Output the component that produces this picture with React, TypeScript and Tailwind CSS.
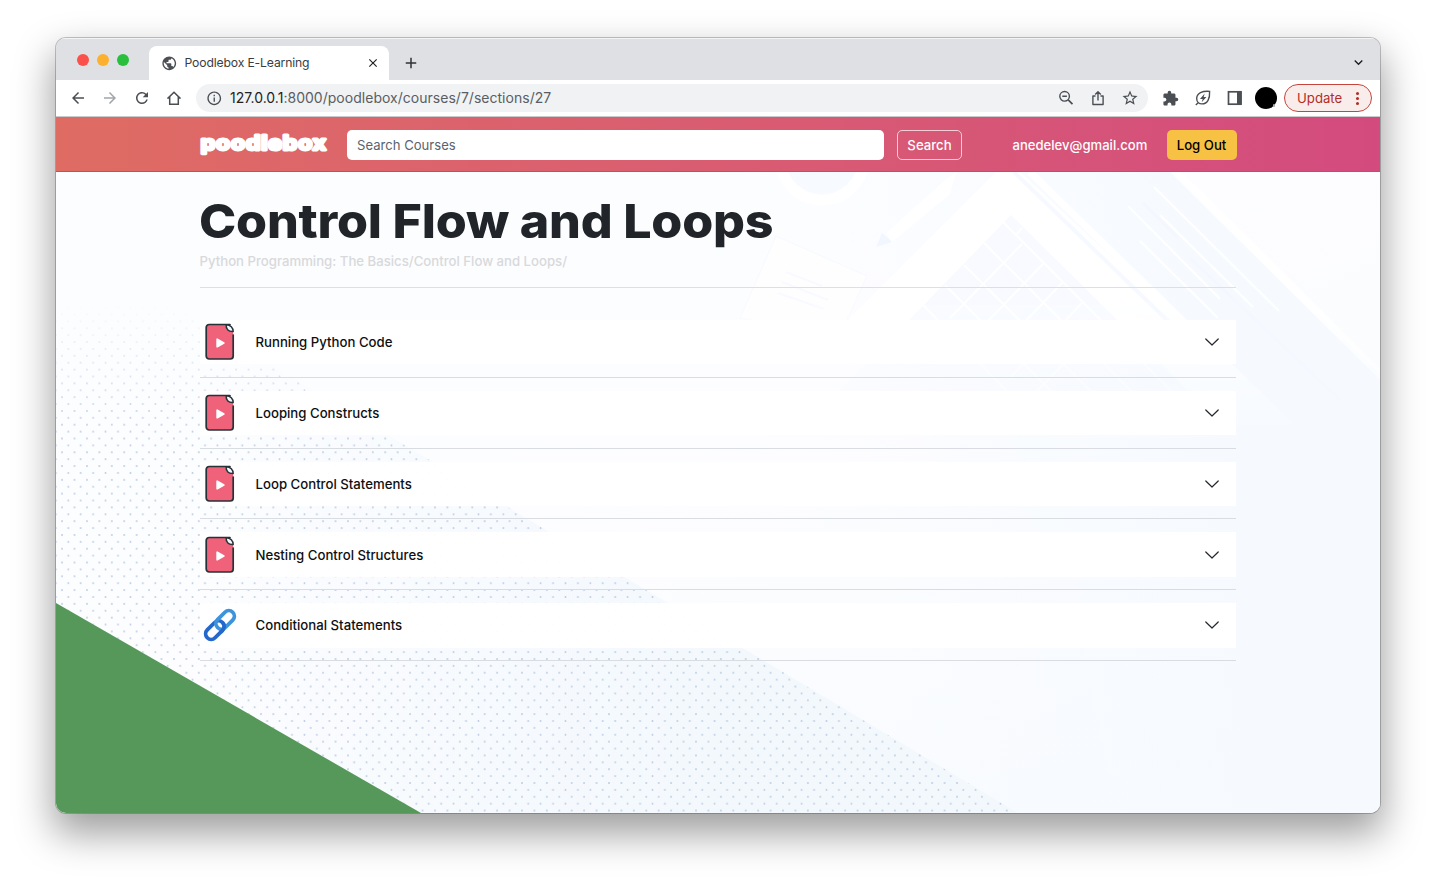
import React from "react";
import {
  MdPublic, MdClose, MdAdd, MdArrowBack, MdArrowForward, MdRefresh, MdInfoOutline,
  MdStarBorder, MdExtension, MdExpandMore,
} from "react-icons/md";

const lessons = [
  { title: "Running Python Code", kind: "video" },
  { title: "Looping Constructs", kind: "video" },
  { title: "Loop Control Statements", kind: "video" },
  { title: "Nesting Control Structures", kind: "video" },
  { title: "Conditional Statements", kind: "link" },
];

function VideoIcon() {
  return (
    <svg width="30" height="38" viewBox="0 0 30 38" fill="none">
      <path d="M21 1.500H4.200A3 3 0 0 0 1.200 4.500V33a3 3 0 0 0 3 3h21a3 3 0 0 0 3-3V9L21 6z" fill="#f0617a" />
      <path d="M28.200 12V33a3 3 0 0 1-3 3H4.200a3 3 0 0 1-3-3V4.500a3 3 0 0 1 3-3H25" stroke="#263238" strokeWidth="1.700" strokeLinecap="round" />
      <path d="M21.200 1.700c-.4 4.200 1.800 7 7 6.800C28.200 4.700 25.500 1.700 21.200 1.700z" fill="#f6f8fc" stroke="#263238" strokeWidth="1.500" strokeLinejoin="round" />
      <path d="M12.200 16.300v7.400l6.600-3.700z" fill="#fff" stroke="#fff" strokeWidth="1.800" strokeLinejoin="round" />
    </svg>
  );
}

function LinkIcon() {
  return (
    <svg width="34" height="34" viewBox="0 0 34 34" fill="none">
      <g transform="rotate(-45 17 17)" strokeWidth="3.800">
        <rect x="-1" y="11.500" width="21.500" height="11" rx="5.500" stroke="#2468cb" />
        <rect x="13.500" y="11.500" width="21.500" height="11" rx="5.500" stroke="#3d94dc" />
        <path d="M12 22.500H15a5.500 5.500 0 0 0 5.500-5.500" stroke="#2468cb" />
      </g>
    </svg>
  );
}

function Backdrop() {
  return (
    <svg className="absolute inset-0" width="1324" height="641" viewBox="56 172 1324 641" fill="none">
      <defs>
        <linearGradient id="base" x1="0" y1="0" x2="1" y2="1">
          <stop offset="0" stopColor="#fcfdff" />
          <stop offset=".45" stopColor="#fdfdff" />
          <stop offset="1" stopColor="#f7fafe" />
        </linearGradient>
        <linearGradient id="sky" gradientUnits="userSpaceOnUse" x1="850" y1="400" x2="1200" y2="330">
          <stop offset="0" stopColor="#f6faff" stopOpacity="0" />
          <stop offset="1" stopColor="#f6faff" />
        </linearGradient>
        <linearGradient id="zone" gradientUnits="userSpaceOnUse" x1="200" y1="650" x2="720" y2="650">
          <stop offset="0" stopColor="#f1f8fd" stopOpacity="0" />
          <stop offset="1" stopColor="#f3f8fd" />
        </linearGradient>
        <linearGradient id="fade" gradientUnits="userSpaceOnUse" x1="0" y1="300" x2="0" y2="430">
          <stop offset="0" stopColor="#fff" stopOpacity="0" />
          <stop offset="1" stopColor="#fff" />
        </linearGradient>
        <linearGradient id="settle" gradientUnits="userSpaceOnUse" x1="0" y1="290" x2="0" y2="440">
          <stop offset="0" stopColor="#fff" />
          <stop offset="1" stopColor="#fff" stopOpacity="0" />
        </linearGradient>
        <mask id="reveal" maskUnits="userSpaceOnUse" x="56" y="172" width="1324" height="641">
          <rect x="56" y="172" width="1324" height="641" fill="url(#fade)" />
        </mask>
        <mask id="desk" maskUnits="userSpaceOnUse" x="56" y="172" width="1324" height="641">
          <rect x="56" y="172" width="1324" height="641" fill="url(#settle)" />
        </mask>
        <pattern id="dots" patternUnits="userSpaceOnUse" x="696" y="645.200" width="12.430" height="13.780">
          <circle cx="6.200" cy="6.890" r=".95" fill="#bccbe3" />
          <circle cx="0" cy="0" r=".95" fill="#bccbe3" />
          <circle cx="12.430" cy="0" r=".95" fill="#bccbe3" />
          <circle cx="0" cy="13.780" r=".95" fill="#bccbe3" />
          <circle cx="12.430" cy="13.780" r=".95" fill="#bccbe3" />
        </pattern>
      </defs>
      <rect x="56" y="172" width="1324" height="641" fill="url(#base)" />
      <path d="M850 172H1172L1380 374V813H850z" fill="url(#sky)" />
      <g mask="url(#desk)">
        <circle cx="822" cy="158" r="42" stroke="#fff" strokeWidth="11" fill="#f7faff" />
        <path d="M776 236L867 276L840 335L740 318z" fill="#fefeff" stroke="#f7f9fe" />
        <path d="M786 272l36 14M782 282l46 18M778 293l46 16" stroke="#f8faff" strokeWidth="2" />
        <path d="M886 233L944 181L956 172L950 194L892 242z" fill="#fff" />
        <path d="M882 233l10 9-16 5z" fill="#f1f6ff" />
        <path d="M996 172L850 318L900 450H1320L1020 172z" fill="#fff" />
        <path d="M1011 215L1210 412H820z" fill="#f8faff" />
        <g stroke="#fff" strokeWidth="2">
          <path d="M1003 222L1200 420M984 243L1170 430M964 265L1130 430M945 285L1080 420M923 305L1040 425" />
          <path d="M1022 228L1016 235M1022 244L950 318M1043 264L960 350M1062 283L1000 348M1082 303L1010 378M1105 322L1030 398" />
        </g>
        <path d="M1030 172L1300 435" stroke="#fff" strokeWidth="7" />
        <path d="M1014 172L1170 323" stroke="#f6f9ff" strokeWidth="4" />
        <path d="M1143 203L1178 238M1190 258L1340 400" stroke="#f4f7ff" strokeWidth="3" />
        <g stroke="#fff" strokeWidth="2">
          <path d="M1154 187L1279 311M1128 206L1220 299M1160 215L1253 307M1140 241L1218 318" />
        </g>
        <path d="M1172 168L1384 378" stroke="#fff" strokeWidth="8" />
      </g>
      <g mask="url(#reveal)">
        <path d="M56 236L1018 813H56z" fill="url(#zone)" />
        <path d="M56 236L1018 813H56z" fill="url(#dots)" />
      </g>
      <path d="M56 603L421 813H56z" fill="#569859" />
    </svg>
  );
}

function Browser() {
  return (
    <>
      <div className="flex h-[42px] shrink-0 items-end bg-[#dee0e4] shadow-[inset_0_1px_0_#f3f4f5]">
        <div className="flex h-full w-[93px] items-center gap-2 pl-[21px] pt-[2px]">
          <span className="h-3 w-3 rounded-full bg-[#fb514b]" />
          <span className="h-3 w-3 rounded-full bg-[#fcb02f]" />
          <span className="h-3 w-3 rounded-full bg-[#27bf3c]" />
        </div>
        <div className="flex h-[34px] w-[240px] items-center rounded-t-lg bg-white pl-3 pr-[9px] text-[#3c4043]">
          <MdPublic size={16.5} className="shrink-0 text-[#4c5054]" />
          <span className="ml-[7px] flex-1 whitespace-nowrap text-[12.2px] tracking-[-0.15px] text-[#3a3d41]">Poodlebox E-Learning</span>
          <MdClose size={14} className="text-[#1f2225]" />
        </div>
        <MdAdd size={18} className="mb-2 ml-[13px] text-[#2f3235]" />
        <MdExpandMore size={17} className="mb-[9px] ml-auto mr-[13px] text-[#1f2225]" />
      </div>
      <div className="flex h-[37px] shrink-0 items-center border-b border-[#c9cacc] bg-white text-[#4b4f54]">
        <div className="flex w-[140px] items-center gap-[14px] pl-[13px]">
          <MdArrowBack size={18} />
          <MdArrowForward size={18} className="text-[#a3a6a9]" />
          <MdRefresh size={18} />
          <svg width="18" height="18" viewBox="0 0 18 18" fill="none" stroke="currentColor" strokeWidth="1.500">
            <path d="M2.500 9.600L9 3.200l6.500 6.400M4.700 8v7.200h8.600V8" />
          </svg>
        </div>
        <div className="flex h-7 w-[952px] items-center rounded-full bg-[#f0f2f4] pl-[10px] pr-[9px]">
          <MdInfoOutline size={16.5} />
          <span className="ml-[7.5px] pb-[2px] text-[14px] tracking-[0.02px] text-[#5a5e63]">
            <span className="text-[#1f2124]">127.0.0.1</span>:8000/poodlebox/courses/7/sections/27
          </span>
          <div className="ml-auto flex items-center gap-4">
            <svg width="16" height="16" viewBox="0 0 16 16" fill="none" stroke="currentColor" strokeWidth="1.400">
              <circle cx="6.600" cy="6.300" r="4.800" />
              <path d="M4.300 6.300h4.600" />
              <path d="M10.200 9.900l4.300 4.300" strokeWidth="1.700" />
            </svg>
            <svg width="16" height="16" viewBox="0 0 16 16" fill="none" stroke="currentColor" strokeWidth="1.400">
              <path d="M5.500 6H2.900v8.500h10.200V6h-2.600M8 10.500V2M5.200 4.500L8 1.700l2.800 2.800" strokeLinejoin="round" />
            </svg>
            <MdStarBorder size={18} className="-ml-px" />
          </div>
        </div>
        <div className="ml-[14px] flex items-center gap-4">
          <MdExtension size={17} />
          <svg width="16" height="16" viewBox="0 0 16 16" fill="none" stroke="currentColor" strokeWidth="1.400">
            <path d="M14.600 1.400C7.500.9 1.700 3 1.700 8.500c0 3.200 2.200 5.400 5.300 5.400 5.600 0 8-5.200 7.600-12.500zM.8 15l2.600-2.600" />
            <path d="M9.700 3.600L5 8.900h2.700L6.700 12.300l4.700-5.200H8.700z" fill="currentColor" stroke="none" />
          </svg>
          <svg width="16" height="16" viewBox="0 0 16 16" fill="none">
            <rect x="1.500" y="1.800" width="12.500" height="12.400" stroke="currentColor" strokeWidth="1.700" />
            <path d="M10 1.800h4.500v12.400H10z" fill="currentColor" />
          </svg>
        </div>
        <div className="relative ml-[12px] h-[22px] w-[22px] rounded-full bg-black">
          <span className="absolute bottom-[2px] right-[2px] h-[3px] w-[2px] rounded-full bg-[#aaa]" />
        </div>
        <div className="ml-[7px] flex h-7 w-[88px] items-center rounded-full border border-[#c5453c] bg-[#f9edec] pl-3 text-[#b52c26]">
          <span className="pt-px text-[13.2px]">Update</span>
          <span className="ml-[14px] flex flex-col gap-[2px]">
            <i className="h-[3px] w-[3px] rounded-full bg-current" />
            <i className="h-[3px] w-[3px] rounded-full bg-current" />
            <i className="h-[3px] w-[3px] rounded-full bg-current" />
          </span>
        </div>
      </div>
    </>
  );
}

export default function App() {
  return (
    <div className="h-[887px] w-[1436px] overflow-hidden bg-white px-[56px] pt-[38px] font-['Inter','Liberation_Sans',sans-serif]">
      <div className="flex h-[775px] w-[1324px] flex-col overflow-hidden rounded-[10px] shadow-[0_0_0_1px_rgba(0,0,0,0.22),0_18px_38px_3px_rgba(0,0,0,0.38)]">
        <Browser />
        <header className="flex h-[55px] shrink-0 items-center border-b border-[#d54468] bg-linear-to-r from-[#df6c63] to-[#d34b7e] pl-[143px] pt-[2px] text-[13.2px]">
          <svg width="132" height="34" viewBox="0 0 132 34">
            <text x="1.800" y="21.500" textLength="126" lengthAdjust="spacingAndGlyphs" fill="#fff" stroke="#fff" strokeWidth="3" strokeLinejoin="round" className="font-['Inter',sans-serif] text-[19.5px] font-bold tracking-[0.8px]">poodlebox</text>
          </svg>
          <div className="ml-4 flex h-[30px] w-[537px] items-center rounded-[5px] bg-white pl-[10px] pt-[2px] text-[13.1px] text-[#5b636b]">Search Courses</div>
          <button className="ml-[13px] h-[30px] w-[65px] rounded-[5px] border border-[#f6cdd6] pt-[2px] font-medium text-white">Search</button>
          <span className="ml-[50.500px] w-[154px] whitespace-nowrap pt-[2px] text-[13.1px] font-medium text-white">anedelev@gmail.com</span>
          <button className="h-[30px] w-[70px] whitespace-nowrap rounded-[5px] bg-[#f7c244] pt-[2px] font-medium text-black">Log Out</button>
        </header>
        <div className="relative flex-1">
          <Backdrop />
          <main className="relative ml-[143.5px] w-[1036.5px] pt-[20px]">
            <h1 className="-ml-px origin-left scale-x-[1.067] whitespace-nowrap text-[47px] font-extrabold leading-[58px] tracking-[-0.2px] text-[#212529]">Control Flow and Loops</h1>
            <div className="h-[38px] whitespace-nowrap border-b border-[#dcdfe3] pt-[1px] text-[13.18px] font-medium leading-5 text-[#d8d9db]">Python Programming: The Basics/Control Flow and Loops/</div>
            <div className="pt-[32px]">
              {lessons.map((l) => (
                <div key={l.title} className="h-[70.8px]">
                  <div className="h-[57.8px] border-b border-[#d9dce0]">
                    <div className="flex h-[44.4px] items-center bg-white/95 pr-[17px]">
                      <span className="flex w-10 justify-center">{l.kind === "video" ? <VideoIcon /> : <LinkIcon />}</span>
                      <span className="ml-4 pt-[2px] text-[13.2px] font-medium text-[#0e0f11]">{l.title}</span>
                      <svg className="ml-auto" width="14" height="14" viewBox="0 0 14 14" fill="none">
                        <path d="M.8 4L7 10l6.200-6" stroke="#24282c" strokeWidth="1.200" strokeLinecap="round" strokeLinejoin="round" />
                      </svg>
                    </div>
                  </div>
                </div>
              ))}
            </div>
          </main>
        </div>
      </div>
    </div>
  );
}
